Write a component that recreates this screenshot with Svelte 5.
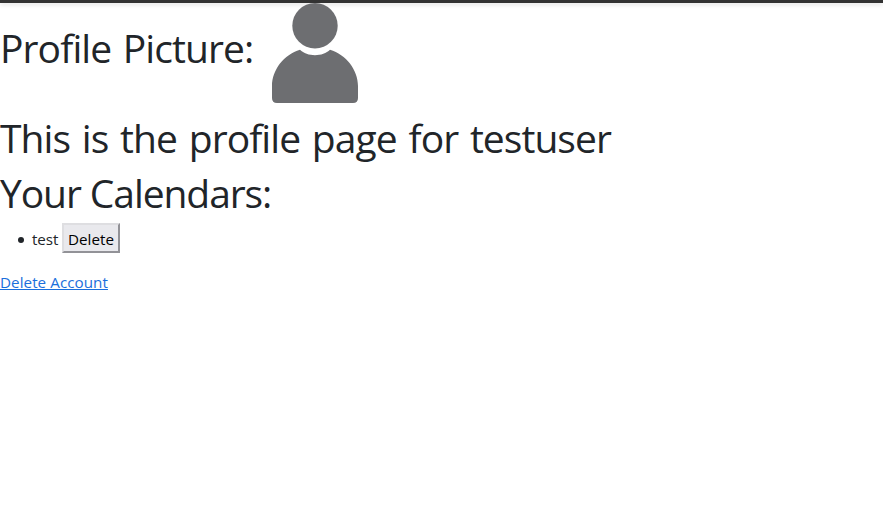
<script>
  const username = 'testuser';
  const calendars = ['test'];
</script>

<div class="navbar-edge"></div>
<main>
  <header>
    <h1 class="picture">Profile Picture:</h1>
    <svg width="86" height="100" viewBox="0 0 86 100" role="img" aria-label="Profile">
      <circle cx="43" cy="22.7" r="22.7" />
      <path d="M28 46.8C35 54 51 54 58 46.8C74 51.5 86 67 86 83V95Q86 100 81 100H5Q0 100 0 95V83C0 67 12 51.5 28 46.8Z" />
    </svg>
  </header>
  <h1 class="intro">This is the profile page for {username}</h1>
  <h1 class="cal">Your Calendars:</h1>
  <ul>
    {#each calendars as name}
      <li><span class="name">{name}</span><button>Delete</button></li>
    {/each}
  </ul>
  <a href="#delete">Delete Account</a>
</main>

<style>
  :global(body) {
    margin: 0;
    background: #fff;
    color: #212529;
    font: 400 16px/24px "Segoe UI", "Open Sans", "Noto Sans", sans-serif;
  }
  .navbar-edge {
    height: 3px;
    background: #333;
    box-shadow: 0 2px 4px rgba(0, 0, 0, 0.12);
  }
  header {
    display: flex;
    height: 111px;
  }
  svg {
    display: block;
    flex: none;
    fill: #6d6e71;
  }
  h1 {
    margin: 0;
    font-size: 39px;
    font-weight: 400;
    line-height: 48px;
    white-space: nowrap;
  }
  .picture {
    width: 272px;
    padding-top: 21px;
    letter-spacing: -0.9px;
    word-spacing: 2.2px;
  }
  .intro {
    margin-bottom: 7px;
    letter-spacing: -0.95px;
    word-spacing: 2.6px;
  }
  .cal {
    letter-spacing: -1.08px;
  }
  ul {
    margin: 0 0 13px;
    padding: 6px 0 0 32px;
    font-size: 15.2px;
    list-style: none;
  }
  li {
    display: flex;
    align-items: center;
    height: 30px;
    margin-bottom: 1px;
  }
  li::before {
    content: "";
    flex: none;
    width: 6px;
    height: 6px;
    margin: 3px 8px 0 -14px;
    border-radius: 50%;
    background: #212529;
  }
  .name {
    width: 30px;
    padding-top: 2px;
    letter-spacing: -0.1px;
  }
  button {
    box-sizing: border-box;
    width: 58px;
    height: 30px;
    padding: 1px 0 0;
    border: 2px solid;
    border-color: #dedee1 #929297 #929297 #dedee1;
    background: #e9e9ed;
    color: #000;
    font: inherit;
    line-height: 24px;
  }
  a {
    display: block;
    width: max-content;
    margin-top: 17px;
    font-size: 15.2px;
    letter-spacing: 0.06px;
    color: #1a6fdc;
    text-decoration: underline;
  }
</style>
